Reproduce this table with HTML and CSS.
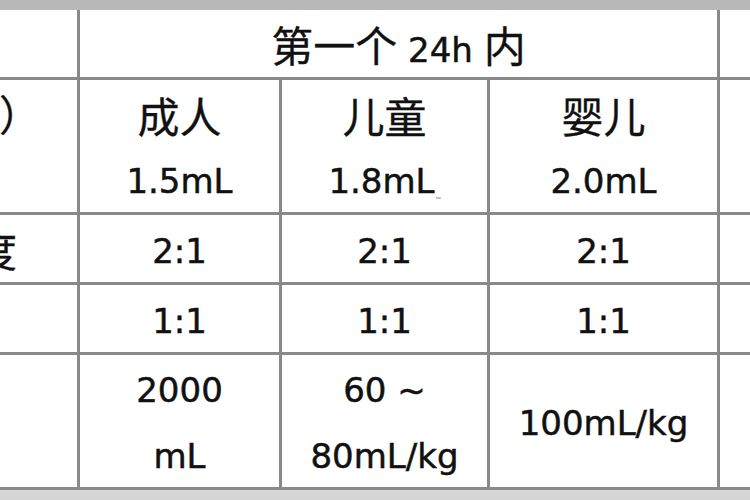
FILE: index.html
```html
<!DOCTYPE html>
<html lang="zh">
<head>
<meta charset="utf-8">
<title>补液表</title>
<link rel="stylesheet" href="styles.css">
</head>
<body>
<div class="page">
  <div class="band-top"></div>
  <div class="sheet">
    <div class="cell"></div>
    <div class="cell span3"><div class="ln"><span class="zh">第一个</span> 24h <span class="zh">内</span></div></div>
    <div class="cell"></div>

    <div class="cell label paren"><span class="zh">用量（mL/kg）</span></div>
    <div class="cell"><div class="ln zh">成人</div><div class="ln">1.5mL</div></div>
    <div class="cell"><div class="ln zh">儿童</div><div class="ln">1.8mL<span class="mark"></span></div></div>
    <div class="cell"><div class="ln zh">婴儿</div><div class="ln">2.0mL</div></div>
    <div class="cell"></div>

    <div class="cell label du"><span class="zh">溶液浓度</span></div>
    <div class="cell"><div class="ln">2:1</div></div>
    <div class="cell"><div class="ln">2:1</div></div>
    <div class="cell"><div class="ln">2:1</div></div>
    <div class="cell"></div>

    <div class="cell"></div>
    <div class="cell"><div class="ln">1:1</div></div>
    <div class="cell"><div class="ln">1:1</div></div>
    <div class="cell"><div class="ln">1:1</div></div>
    <div class="cell"></div>

    <div class="cell"></div>
    <div class="cell"><div class="ln">2000</div><div class="ln">mL</div></div>
    <div class="cell"><div class="ln">60 ~</div><div class="ln">80mL/kg</div></div>
    <div class="cell"><div class="ln">100mL/kg</div></div>
    <div class="cell"></div>
  </div>
  <div class="band-bottom"></div>
</div>
</body>
</html>
```
FILE: styles.css
```css
html, body {
  margin: 0;
  padding: 0;
  background: #ffffff;
}

.page {
  width: 750px;
  height: 500px;
  overflow: hidden;
  font-family: "DejaVu Sans", "Noto Sans CJK SC", sans-serif;
  font-size: 34px;
  color: #111111;
  -webkit-text-stroke: 0.5px #111111;
}

.band-top {
  height: 10px;
  background: #b9b9b9;
}

.band-bottom {
  height: 10px;
  background: #d6d6d6;
}

.sheet {
  display: grid;
  grid-template-columns: 77px 199px 205px 227px 30px;
  grid-template-rows: 67px 132px 67px 67px 132px;
  gap: 3px;
  padding-bottom: 3px;
  background: #898989;
}

.cell {
  background: #ffffff;
  display: flex;
  flex-direction: column;
  align-items: center;
  justify-content: center;
  padding-top: 4px;
  box-sizing: border-box;
  overflow: hidden;
  white-space: nowrap;
}

.span3 {
  grid-column: span 3;
  padding-top: 0;
}

.ln {
  line-height: 66px;
  height: 66px;
  white-space: pre;
}

.zh {
  font-family: "Noto Sans CJK SC", "DejaVu Sans", sans-serif;
  font-size: 42px;
  -webkit-text-stroke: 0.3px #111111;
}

.label {
  flex-direction: row;
  justify-content: flex-end;
}

.paren {
  align-items: flex-start;
  padding-top: 0;
  padding-right: 36px;
  line-height: 66px;
}

.du {
  padding-right: 60px;
  padding-top: 0;
  line-height: 66px;
}

.mark {
  display: inline-block;
  width: 5px;
  height: 2px;
  margin-left: 1px;
  background: #c4c4c4;
  -webkit-text-stroke: 0;
  vertical-align: -6px;
}
```
